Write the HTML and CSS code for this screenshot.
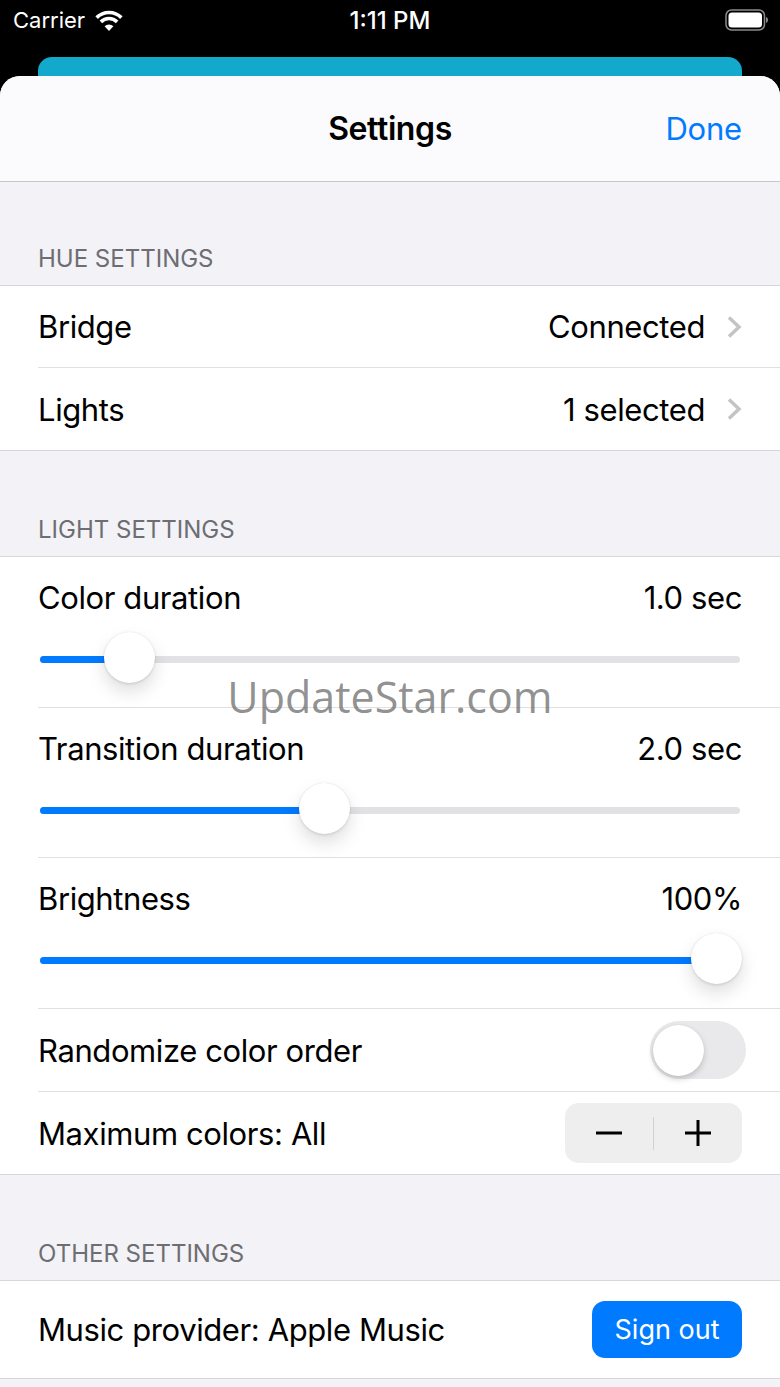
FILE: index.html
```html
<!DOCTYPE html>
<html lang="en">
<head>
<meta charset="utf-8">
<title>Settings</title>
<link rel="stylesheet" href="styles.css">
</head>
<body>
<div class="screen">
  <header class="status">
    <div class="status-left">
      <span>Carrier</span>
      <svg class="wifi" viewBox="0 0 28 22" width="28" height="22"><path d="M1.630 8.630A17.500 17.500 0 0 1 26.370 8.630M5.870 12.870A11.500 11.500 0 0 1 22.130 12.870" fill="none" stroke="#fff" stroke-width="3.600"/><path d="M14 22L9.600 17.300A6 6 0 0 1 18.400 17.300Z" fill="#fff"/></svg>
    </div>
    <span class="clock">1:11 PM</span>
    <svg class="battery" viewBox="0 0 44 22" width="44" height="22"><rect x="1" y="1" width="38.500" height="20" rx="5.500" fill="none" stroke="#8a8a8a" stroke-width="1.500"/><rect x="3.500" y="3.500" width="33.500" height="15" rx="3.500" fill="#fff"/><path d="M41 8v6c1.300-.4 2-1.600 2-3s-.7-2.600-2-3z" fill="#8a8a8a"/></svg>
  </header>
  <div class="peek"></div>
  <main class="sheet">
    <nav class="nav">
      <h1 class="nav-title">Settings</h1>
      <span class="nav-done">Done</span>
    </nav>

    <h2 class="section-title first">HUE SETTINGS</h2>
    <section class="group">
      <div class="row link-row">
        <span>Bridge</span>
        <span class="value">Connected<svg class="chev" viewBox="0 0 15 22" width="15" height="22"><path d="M2 1.500l10 9.500-10 9.500" fill="none" stroke="#c4c4c7" stroke-width="3.500"/></svg></span>
      </div>
      <div class="row link-row last">
        <span>Lights</span>
        <span class="value">1 selected<svg class="chev" viewBox="0 0 15 22" width="15" height="22"><path d="M2 1.500l10 9.500-10 9.500" fill="none" stroke="#c4c4c7" stroke-width="3.500"/></svg></span>
      </div>
    </section>

    <h2 class="section-title">LIGHT SETTINGS</h2>
    <section class="group">
      <div class="slider-row">
        <div class="slider-head"><span>Color duration</span><span>1.0 sec</span></div>
        <div class="slider"><div class="slider-fill" style="width:65px"></div><div class="thumb" style="left:64px"></div></div>
      </div>
      <div class="slider-row compact">
        <div class="slider-head"><span>Transition duration</span><span>2.0 sec</span></div>
        <div class="slider"><div class="slider-fill" style="width:260px"></div><div class="thumb" style="left:259px"></div></div>
      </div>
      <div class="slider-row">
        <div class="slider-head"><span>Brightness</span><span>100%</span></div>
        <div class="slider"><div class="slider-fill" style="width:652px"></div><div class="thumb" style="left:651px"></div></div>
      </div>
      <div class="row toggle-row">
        <span>Randomize color order</span>
        <div class="toggle"><div class="toggle-knob"></div></div>
      </div>
      <div class="row stepper-row last">
        <span>Maximum colors: All</span>
        <div class="stepper">
          <svg viewBox="0 0 88 60" width="88" height="60"><path d="M31 30h26" stroke="#000" stroke-width="3" fill="none"/></svg>
          <i class="stepper-sep"></i>
          <svg viewBox="0 0 88 60" width="88" height="60"><path d="M31 30h26M44 17v26" stroke="#000" stroke-width="3" fill="none"/></svg>
        </div>
      </div>
    </section>

    <h2 class="section-title">OTHER SETTINGS</h2>
    <section class="group">
      <div class="row provider-row last">
        <span>Music provider: Apple Music</span>
        <span class="signout">Sign out</span>
      </div>
    </section>
  </main>
  <div class="watermark">UpdateStar.com</div>
</div>
</body>
</html>
```
FILE: styles.css
```css
* { box-sizing: border-box; }
html, body { margin: 0; padding: 0; }
body { background: #000; font-family: Inter, "Liberation Sans", sans-serif; color: #000; }
.screen { position: relative; width: 780px; height: 1387px; overflow: hidden; background: #000; }

.status { height: 57px; padding: 0 11px 18px 13px; display: flex; align-items: center; justify-content: space-between; color: #fff; position: relative; font-size: 24px; }
.status-left { display: flex; align-items: center; gap: 10px; font-size: 22px; }
.wifi { display: block; }
.clock { position: absolute; left: 0; right: 0; top: 6px; text-align: center; font-weight: 500; }
.battery { display: block; }

.peek { height: 40px; margin: 0 38px -21px; background: #13a9cd; border-radius: 14px 14px 0 0; }

.sheet { position: relative; height: 1311px; background: #f2f2f7; border-radius: 20px 20px 0 0; overflow: hidden; letter-spacing: -0.4px; }
.nav { height: 106px; padding: 0 38px 1px 0; background: #fbfbfd; border-bottom: 1px solid #c8c8ca; display: flex; align-items: center; justify-content: flex-end; position: relative; }
.nav-title { position: absolute; left: 0; right: 0; margin: 0; text-align: center; font-size: 32px; font-weight: 600; }
.nav-done { color: #007aff; font-size: 31px; position: relative; letter-spacing: -0.2px; }

.section-title { margin: 0; height: 105px; padding: 0 38px 12px; display: flex; align-items: flex-end; font-size: 24px; font-weight: 400; color: #6d6d72; letter-spacing: 0; }
.section-title.first { height: 103px; }
.group { background: #fff; border-top: 1px solid #d8d8dc; border-bottom: 1px solid #d8d8dc; }

.row { margin-left: 38px; padding-right: 38px; display: flex; align-items: center; justify-content: space-between; font-size: 31px; border-bottom: 1px solid #e0e0e3; }
.row.last { border-bottom: 0; }
.link-row { height: 82px; }
.value { display: flex; align-items: center; gap: 22px; }
.chev { display: block; }

.slider-row { margin-left: 38px; height: 151px; padding: 23px 38px 0 0; border-bottom: 1px solid #e0e0e3; font-size: 31px; }
.slider-row.compact { height: 150px; }
.slider-head { display: flex; justify-content: space-between; line-height: 36px; }
.slider { position: relative; height: 7px; margin: 40px 2px 0 2px; background: #e2e2e5; border-radius: 4px; }
.slider-fill { height: 100%; background: #007aff; border-radius: 4px 0 0 4px; }
.thumb { position: absolute; top: -24px; width: 51px; height: 51px; border-radius: 50%; background: #fff; box-shadow: 0 9px 18px rgba(0,0,0,.13), 0 1px 3px rgba(0,0,0,.12), 0 0 1px rgba(0,0,0,.1); }

.toggle-row { height: 83px; }
.toggle { width: 96px; height: 58px; margin-right: -4px; border-radius: 30px; background: #e9e9eb; position: relative; }
.toggle-knob { position: absolute; left: 3px; top: 4px; width: 51px; height: 51px; border-radius: 50%; background: #fff; box-shadow: 0 3px 6px rgba(0,0,0,.18), 0 0 1px rgba(0,0,0,.1); }

.stepper-row { height: 82px; }
.stepper { width: 177px; height: 60px; border-radius: 14px; background: #eeeeef; display: flex; align-items: center; }
.stepper svg { display: block; }
.stepper-sep { width: 1px; height: 33px; background: #d0d0d3; }

.provider-row { height: 97px; }
.signout { width: 150px; height: 57px; border-radius: 13px; background: #007aff; color: #fff; font-size: 27px; letter-spacing: 0; display: flex; align-items: center; justify-content: center; }

.watermark { position: absolute; left: 0; right: 0; top: 671px; text-align: center; font-family: "Open Sans", sans-serif; font-size: 43px; line-height: 52px; color: rgba(90,90,90,.68); pointer-events: none; }
```
